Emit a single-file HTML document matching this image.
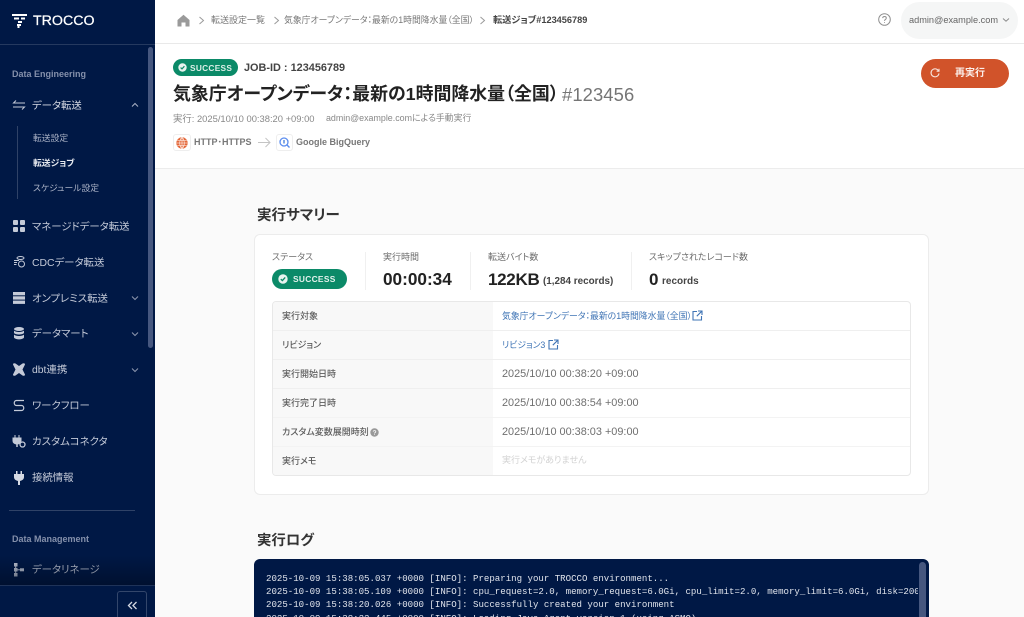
<!DOCTYPE html>
<html lang="ja"><head><meta charset="utf-8"><title>転送ジョブ</title>
<style>
*{box-sizing:border-box}
html,body{margin:0;padding:0;width:1024px;height:617px;overflow:hidden;background:#fafafa;font-family:"Liberation Sans","Noto Sans CJK JP",sans-serif;font-feature-settings:"palt"}
#root{position:relative;width:1024px;height:617px;overflow:hidden;background:#fafafa;filter:blur(.25px)}
.t{position:absolute;white-space:nowrap;line-height:1;margin-top:1px}
.b{position:absolute}
svg{position:absolute;overflow:visible}
.nav{font-size:10.4px;color:#c4cad8;left:32px;margin-top:2px}
.sub{font-size:8.8px;color:#aab2c6;left:33px}
.lab{font-size:9px;color:#5c5c5c;left:282px;font-weight:500}
.val{font-size:10.9px;color:#6f6f6f;left:502px}
.cap{font-size:9px;color:#6b6b6b;top:252px}
.row{position:absolute;left:273px;width:637px;height:1px;background:#efefef}
.log{position:absolute;left:266px;font:9.08px/13.2px "Liberation Mono",monospace;color:#dfe3eb;white-space:pre}
</style></head><body><div id="root">

<!-- Top bar -->
<div class="b" style="left:155px;top:0;width:869px;height:44px;background:#fff;border-bottom:1px solid #e9e9e9"></div>
<svg style="left:177px;top:14px" width="13" height="13" viewBox="0 0 13 13"><path d="M0.5 6 6.5 0.8 12.5 6V12.5H8.5V8.5H4.500V12.5H0.5Z" fill="#9a9a9a"/></svg>
<svg style="left:198px;top:16px" width="7" height="9" fill="none" stroke="#9a9a9a"><path d="M1.5 1 5.5 4.5 1.5 8"/></svg>
<div class="t" style="left:211px;top:15px;font-size:9px;color:#777">転送設定一覧</div>
<svg style="left:273px;top:16px" width="7" height="9" fill="none" stroke="#9a9a9a"><path d="M1.5 1 5.5 4.5 1.5 8"/></svg>
<div class="t" style="left:284px;top:15px;font-size:8.85px;color:#777">気象庁オープンデータ：最新の1時間降水量（全国）</div>
<svg style="left:479px;top:16px" width="7" height="9" fill="none" stroke="#9a9a9a"><path d="M1.5 1 5.5 4.5 1.5 8"/></svg>
<div class="t" style="left:493px;top:15px;font-size:9.2px;color:#444;font-weight:700">転送ジョブ#123456789</div>
<svg style="left:878px;top:13px" width="13" height="13" viewBox="0 0 13 13" fill="none" stroke="#8f8f8f"><circle cx="6.5" cy="6.5" r="5.8"/><path d="M4.7 5.1C4.8 3 8.3 3 8.3 5.1 8.3 6.5 6.5 6.4 6.5 7.9M6.5 9.2V10"/></svg>
<div class="b" style="left:901px;top:2px;width:117px;height:37px;border-radius:19px;background:#f5f6f6"></div>
<div class="t" style="left:909px;top:15px;font-size:9.2px;color:#666">admin@example.com</div>
<svg style="left:1002px;top:17px" width="8" height="6" fill="none" stroke="#8a8a8a"><path d="M1 1.5 4 4.2 7 1.5"/></svg>

<!-- Header -->
<div class="b" style="left:155px;top:44px;width:869px;height:125px;background:#fff;border-bottom:1px solid #ececec"></div>
<div class="b" style="left:173px;top:59px;width:65px;height:17px;border-radius:9px;background:#0b8a68"></div>
<svg style="left:178px;top:63px" width="9" height="9" viewBox="0 0 9 9"><circle cx="4.5" cy="4.5" r="4.2" fill="#e8f3ef"/><path d="M2.6 4.6 4 5.9 6.4 3.2" fill="none" stroke="#0b8a68" stroke-width="1.2"/></svg>
<div class="t" style="left:190px;top:63px;font-size:8.3px;font-weight:700;color:#dcefe8;letter-spacing:.3px">SUCCESS</div>
<div class="t" style="left:244px;top:62px;font-size:10.9px;color:#444;font-weight:700">JOB-ID : 123456789</div>
<div class="t" style="left:173px;top:85px;font-size:17.9px;font-weight:700;color:#222">気象庁オープンデータ：最新の1時間降水量（全国）</div>
<div class="t" style="left:562px;top:85px;font-size:18.4px;color:#757575;letter-spacing:.1px">#123456</div>
<div class="t" style="left:173px;top:113px;font-size:9.4px;color:#888">実行: 2025/10/10 00:38:20 +09:00</div>
<div class="t" style="left:326px;top:113px;font-size:8.9px;color:#888">admin@example.comによる手動実行</div>
<div class="b" style="left:173px;top:134px;width:18px;height:17px;border:1px solid #eee;border-radius:3px;background:#fff"></div>
<svg style="left:176px;top:137px" width="12" height="12" viewBox="0 0 12 12"><circle cx="6" cy="6" r="5.7" fill="#e4683a"/><path d="M0.5 6H11.5M1.2 3.5H10.8M1.2 8.5H10.8M6 .3V11.7M6 .3C3 3 3 9 6 11.7M6 .3C9 3 9 9 6 11.7" fill="none" stroke="#fff" stroke-width=".6"/></svg>
<div class="t" style="left:194px;top:137px;font-size:9px;font-weight:700;color:#777">HTTP･HTTPS</div>
<svg style="left:258px;top:137px" width="13" height="11" fill="none" stroke="#c4c4c4"><path d="M0 5.5H12M7.5 1 12 5.5 7.5 10"/></svg>
<div class="b" style="left:276px;top:134px;width:17px;height:17px;border:1px solid #eee;border-radius:3px;background:#fff"></div>
<svg style="left:279px;top:137px" width="11" height="11" viewBox="0 0 11 11" fill="none"><circle cx="5" cy="5" r="4" stroke="#5b8def" stroke-width="1.3"/><path d="M8 8 10.5 10.5" stroke="#5b8def" stroke-width="1.4"/><path d="M5 3V6.500" stroke="#2f6fd6" stroke-width="1.2"/></svg>
<div class="t" style="left:296px;top:137px;font-size:9px;font-weight:700;color:#777">Google BigQuery</div>
<div class="b" style="left:921px;top:59px;width:88px;height:29px;border-radius:15px;background:#d1532a"></div>
<svg style="left:930px;top:68px" width="10" height="10" viewBox="0 0 10 10" fill="none" stroke="#f7e4dc" stroke-width="1.1"><path d="M8.6 3A4 4 0 1 0 9 5.4"/><path d="M9 .8V3.2H6.6"/></svg>
<div class="t" style="left:955px;top:68px;font-size:10px;font-weight:700;color:#fbeee9">再実行</div>

<!-- Summary -->
<div class="t" style="left:257px;top:208px;font-size:14.5px;font-weight:700;color:#333">実行サマリー</div>
<div class="b" style="left:254px;top:234px;width:675px;height:261px;background:#fff;border:1px solid #ececec;border-radius:6px"></div>
<div class="t cap" style="left:272px">ステータス</div>
<div class="b" style="left:272px;top:269px;width:75px;height:20px;border-radius:10px;background:#0b8a68"></div>
<svg style="left:278px;top:274px" width="10" height="10" viewBox="0 0 10 10"><circle cx="5" cy="5" r="4.7" fill="#e8f3ef"/><path d="M2.8 5.1 4.4 6.6 7.2 3.4" fill="none" stroke="#0b8a68" stroke-width="1.3"/></svg>
<div class="t" style="left:293px;top:274px;font-size:8.4px;font-weight:700;color:#e3f2ed;letter-spacing:.3px">SUCCESS</div>
<div class="b" style="left:365px;top:252px;width:1px;height:38px;background:#f0f0f0"></div>
<div class="t cap" style="left:383px">実行時間</div>
<div class="t" style="left:383px;top:271px;font-size:17.2px;font-weight:700;color:#222;margin-top:0">00:00:34</div>
<div class="b" style="left:470px;top:252px;width:1px;height:38px;background:#f0f0f0"></div>
<div class="t cap" style="left:488px">転送バイト数</div>
<div class="t" style="left:488px;top:271px;font-size:17px;font-weight:700;color:#222;letter-spacing:-.3px;margin-top:0">122KB</div>
<div class="t" style="left:543px;top:276px;font-size:9.9px;color:#444;font-weight:700">(1,284 records)</div>
<div class="b" style="left:631px;top:252px;width:1px;height:38px;background:#f0f0f0"></div>
<div class="t cap" style="left:649px">スキップされたレコード数</div>
<div class="t" style="left:649px;top:271px;font-size:17px;font-weight:700;color:#222;margin-top:0">0</div>
<div class="t" style="left:662px;top:276px;font-size:10px;color:#444;font-weight:700">records</div>

<div class="b" style="left:272px;top:301px;width:639px;height:175px;border:1px solid #e8e8e8;border-radius:4px;background:#fff;overflow:hidden"><div style="width:220px;height:175px;background:#f8f8f8"></div></div>
<div class="row" style="top:330px"></div><div class="row" style="top:359px"></div><div class="row" style="top:388px"></div><div class="row" style="top:417px;background:#f3f3f3"></div><div class="row" style="top:446px;background:#f3f3f3"></div>

<div class="t lab" style="top:311px">実行対象</div>
<div class="t" style="left:502px;top:311px;font-size:8.85px;color:#3f74b5">気象庁オープンデータ：最新の1時間降水量（全国）</div>
<svg style="left:692px;top:310px" width="11" height="11" viewBox="0 0 11 11" fill="none" stroke="#3f74b5" stroke-width="1.1"><path d="M5 1.5H1V10H9.5V6M6 1H10V5M10 1 4.8 6.2"/></svg>
<div class="t lab" style="top:340px">リビジョン</div>
<div class="t" style="left:502px;top:340px;font-size:8.85px;color:#3f74b5">リビジョン3</div>
<svg style="left:548px;top:339px" width="11" height="11" viewBox="0 0 11 11" fill="none" stroke="#3f74b5" stroke-width="1.1"><path d="M5 1.5H1V10H9.5V6M6 1H10V5M10 1 4.8 6.2"/></svg>
<div class="t lab" style="top:369px">実行開始日時</div>
<div class="t val" style="top:368px">2025/10/10 00:38:20 +09:00</div>
<div class="t lab" style="top:398px">実行完了日時</div>
<div class="t val" style="top:397px">2025/10/10 00:38:54 +09:00</div>
<div class="t lab" style="top:427px">カスタム変数展開時刻</div>
<svg style="left:370px;top:428px" width="9" height="9" viewBox="0 0 9 9"><circle cx="4.5" cy="4.5" r="4.2" fill="#999"/><path d="M3.2 3.6C3.3 2.3 5.8 2.3 5.8 3.6 5.8 4.5 4.500 4.500 4.500 5.500M4.500 6.200V7" fill="none" stroke="#fff" stroke-width=".8"/></svg>
<div class="t val" style="top:426px">2025/10/10 00:38:03 +09:00</div>
<div class="t lab" style="top:456px">実行メモ</div>
<div class="t" style="left:502px;top:455px;font-size:9px;color:#d2d2d2">実行メモがありません</div>

<!-- Log -->
<div class="t" style="left:257px;top:533px;font-size:14.4px;font-weight:700;color:#333">実行ログ</div>
<div class="b" style="left:254px;top:559px;width:675px;height:70px;background:#001845;border-radius:6px;overflow:hidden">
<div class="b" style="left:665px;top:3px;width:7px;height:70px;border-radius:4px;background:#46577f"></div>
</div>
<div class="b" style="left:266px;top:572px;width:652px;height:50px;overflow:hidden">
<div class="log" style="left:0;top:0">2025-10-09 15:38:05.037 +0000 [INFO]: Preparing your TROCCO environment...
2025-10-09 15:38:05.109 +0000 [INFO]: cpu_request=2.0, memory_request=6.0Gi, cpu_limit=2.0, memory_limit=6.0Gi, disk=200Gi
2025-10-09 15:38:20.026 +0000 [INFO]: Successfully created your environment
2025-10-09 15:38:22.445 +0000 [INFO]: Loading Java Agent version 1 (using ASMO)</div></div>

<!-- Sidebar -->
<div class="b" style="left:0;top:0;width:155px;height:617px;background:#001845"></div>
<div class="b" style="left:0;top:44px;width:155px;height:1px;background:#25395f"></div>
<div class="b" style="left:148px;top:47px;width:5px;height:301px;border-radius:3px;background:#46577f"></div>
<svg style="left:12px;top:14px" width="15" height="14" viewBox="0 0 15 14" fill="#fff"><path d="M0 0H15V2H0ZM2 3.500H7V5.500H2ZM9 3.500H13V5.500H9ZM6 7H10V9H6ZM5 10H9V12H5ZM5.500 12H7.500V14H5.500Z"/></svg>
<div class="t" style="left:33px;top:13px;font-size:14.2px;color:#fff;-webkit-text-stroke:.25px #fff">TROCCO</div>
<div class="t" style="left:12px;top:69px;font-size:9px;color:#8490ab;font-weight:700">Data Engineering</div>
<svg style="left:12px;top:100px" width="14" height="10" viewBox="0 0 14 10" fill="none" stroke="#c4cad8"><path d="M13 3H1.500L4 .5M1 7H12.500L10 9.500"/></svg>
<div class="t nav" style="top:100px;color:#d5d9e3">データ転送</div>
<svg style="left:131px;top:102px" width="8" height="6" fill="none" stroke="#aab2c6"><path d="M1 4.500 4 1.500 7 4.500"/></svg>
<div class="b" style="left:17px;top:126px;width:1px;height:73px;background:#2f4267"></div>
<div class="t sub" style="top:133px">転送設定</div>
<div class="t sub" style="top:158px;color:#e6e9ef;font-weight:700">転送ジョブ</div>
<div class="t sub" style="top:183px">スケジュール設定</div>

<svg style="left:13px;top:220px" width="12" height="12" fill="#c4cad8"><rect width="5" height="5" rx="1"/><rect x="7" width="5" height="5" rx="1"/><rect y="7" width="5" height="5" rx="1"/><rect x="7" y="7" width="5" height="5" rx="1"/></svg>
<div class="t nav" style="top:221px">マネージドデータ転送</div>
<svg style="left:13px;top:256px" width="13" height="12" viewBox="0 0 13 12" fill="none" stroke="#c4cad8"><ellipse cx="7.500" cy="2" rx="3.500" ry="1.500"/><path d="M1 4.500H6M1 6.500H4M1 8.500H3.500"/><circle cx="8.500" cy="8" r="3"/></svg>
<div class="t nav" style="top:257px">CDCデータ転送</div>
<svg style="left:13px;top:292px" width="12" height="12" fill="#c4cad8"><rect width="12" height="3.300"/><rect y="4.300" width="12" height="3.300"/><rect y="8.600" width="12" height="3.300"/></svg>
<div class="t nav" style="top:293px">オンプレミス転送</div>
<svg style="left:131px;top:295px" width="8" height="6" fill="none" stroke="#8c96ae"><path d="M1 1.500 4 4.500 7 1.500"/></svg>
<svg style="left:14px;top:327px" width="10" height="13" fill="#c4cad8"><ellipse cx="5" cy="2" rx="5" ry="2"/><path d="M0 3.500C1.500 5.500 8.500 5.500 10 3.500V6C8.500 8 1.500 8 0 6ZM0 7.500C1.500 9.500 8.500 9.500 10 7.500V10.500C8.500 13 1.500 13 0 10.500Z"/></svg>
<div class="t nav" style="top:328px">データマート</div>
<svg style="left:131px;top:331px" width="8" height="6" fill="none" stroke="#8c96ae"><path d="M1 1.500 4 4.500 7 1.500"/></svg>
<svg style="left:13px;top:363px" width="12" height="13" viewBox="0 0 12 13" fill="#c4cad8"><path d="M0 1.500C0 0 1.500 0 2.500 .5L6 3 9.500 .5C10.500 0 12 0 12 1.500L9.500 6.500 12 11.500C12 13 10.500 13 9.500 12.500L6 10 2.500 12.500C1.500 13 0 13 0 11.500L2.500 6.500Z"/></svg>
<div class="t nav" style="top:364px">dbt連携</div>
<svg style="left:131px;top:367px" width="8" height="6" fill="none" stroke="#8c96ae"><path d="M1 1.500 4 4.500 7 1.500"/></svg>
<svg style="left:13px;top:399px" width="12" height="13" viewBox="0 0 12 13" fill="none" stroke="#c4cad8" stroke-width="1.200"><path d="M11 1.500H3.500C0.500 1.500 .5 6.500 3.500 6.500H8.500C11.500 6.500 11.500 11.500 8.500 11.500H1"/></svg>
<div class="t nav" style="top:400px">ワークフロー</div>
<svg style="left:13px;top:435px" width="13" height="13" viewBox="0 0 13 13"><path d="M2 0V3M6 0V3M0 3H8V6C8 8 6 9 4 9 2 9 0 8 0 6Z" fill="#c4cad8" stroke="#c4cad8" stroke-width="1"/><path d="M4 9V12" stroke="#c4cad8" stroke-width="1.500"/><circle cx="9.500" cy="9.500" r="2.500" fill="#001845" stroke="#c4cad8" stroke-width="1.300"/></svg>
<div class="t nav" style="top:436px">カスタムコネクタ</div>
<svg style="left:14px;top:471px" width="10" height="14" viewBox="0 0 10 14" fill="#d5d9e3"><path d="M2 0H3.500V3H6.500V0H8V3H10V6C10 8.500 8 9.500 6 10V14H4V10C2 9.500 0 8.500 0 6V3H2Z"/></svg>
<div class="t nav" style="top:472px">接続情報</div>
<div class="b" style="left:9px;top:510px;width:126px;height:1px;background:#2f4267"></div>
<div class="t" style="left:12px;top:534px;font-size:9px;color:#8490ab;font-weight:700">Data Management</div>
<svg style="left:14px;top:563px" width="11" height="14" fill="#c4cad8"><rect width="3.500" height="3.500"/><rect y="5" width="3.500" height="3.500"/><rect y="10" width="3.500" height="3.500"/><rect x="1.200" y="2" width="1" height="10"/><rect x="3" y="6.300" width="3" height="1"/><rect x="6" y="5.300" width="4" height="3"/></svg>
<div class="t nav" style="top:564px">データリネージ</div>
<div class="b" style="left:0;top:555px;width:155px;height:30px;background:linear-gradient(rgba(0,10,30,0),rgba(0,10,30,.55))"></div>
<div class="b" style="left:0;top:585px;width:155px;height:32px;background:#001845;border-top:1px solid #1f3358"></div>
<div class="b" style="left:117px;top:591px;width:30px;height:30px;border:1px solid #33466b;border-radius:3px"></div>
<svg style="left:127px;top:601px" width="11" height="9" fill="none" stroke="#d5d9e3" stroke-width="1.300"><path d="M5 1 1.500 4.500 5 8M9.500 1 6 4.500 9.500 8"/></svg>
</div></body></html>
